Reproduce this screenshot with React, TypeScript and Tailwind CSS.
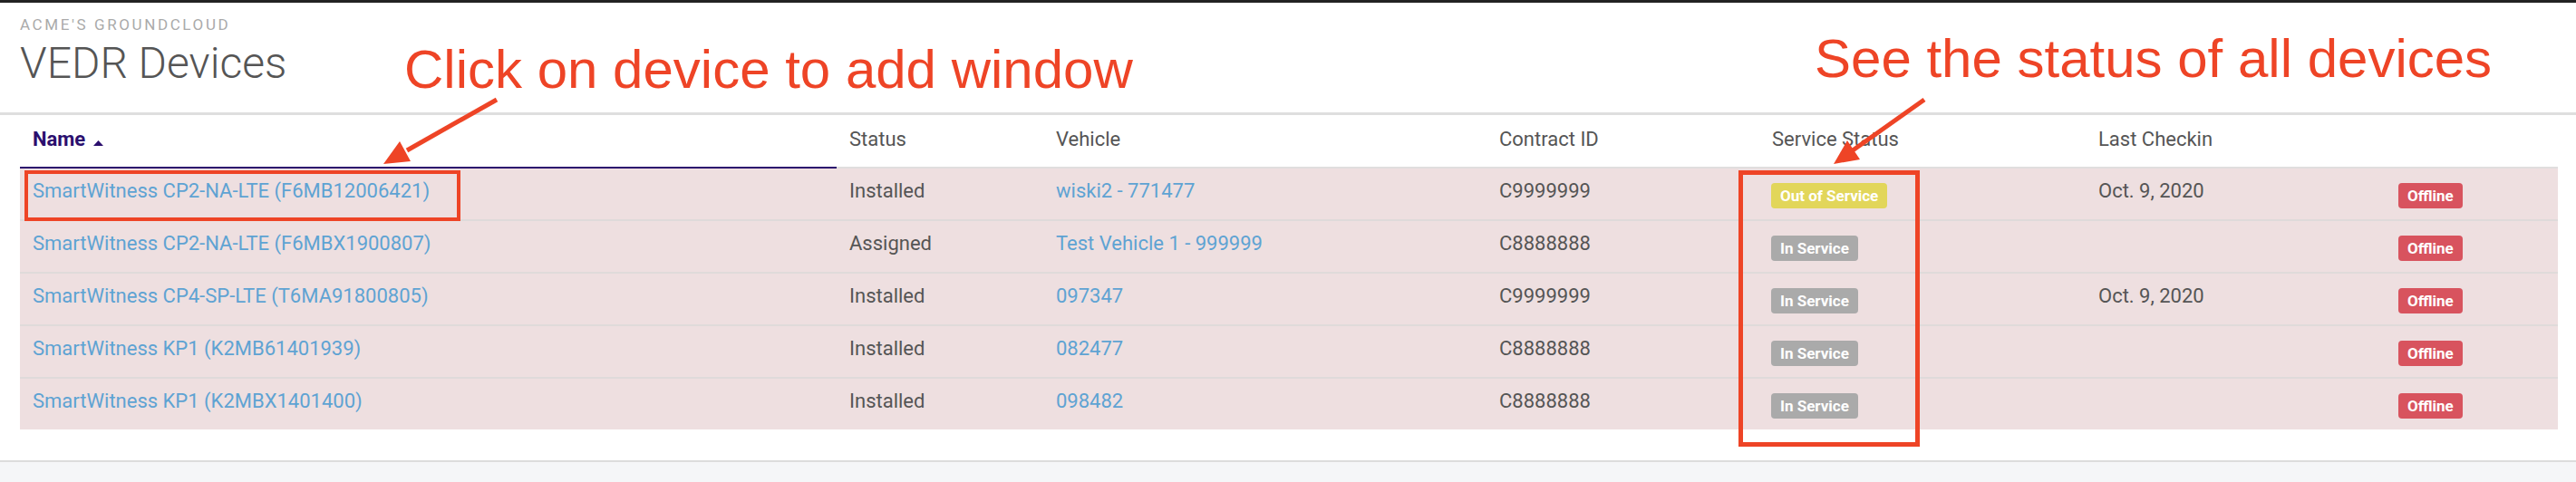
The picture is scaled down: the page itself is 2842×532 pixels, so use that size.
import React from "react";

type Device = {
  id: string;
  name: string;
  status: string;
  vehicle: string;
  contractId: string;
  inService: boolean;
  lastCheckin: string;
};

const devices: Device[] = [
  {
    id: "F6MB12006421",
    name: "SmartWitness CP2-NA-LTE (F6MB12006421)",
    status: "Installed",
    vehicle: "wiski2 - 771477",
    contractId: "C9999999",
    inService: false,
    lastCheckin: "Oct. 9, 2020",
  },
  {
    id: "F6MBX1900807",
    name: "SmartWitness CP2-NA-LTE (F6MBX1900807)",
    status: "Assigned",
    vehicle: "Test Vehicle 1 - 999999",
    contractId: "C8888888",
    inService: true,
    lastCheckin: "",
  },
  {
    id: "T6MA91800805",
    name: "SmartWitness CP4-SP-LTE (T6MA91800805)",
    status: "Installed",
    vehicle: "097347",
    contractId: "C9999999",
    inService: true,
    lastCheckin: "Oct. 9, 2020",
  },
  {
    id: "K2MB61401939",
    name: "SmartWitness KP1 (K2MB61401939)",
    status: "Installed",
    vehicle: "082477",
    contractId: "C8888888",
    inService: true,
    lastCheckin: "",
  },
  {
    id: "K2MBX1401400",
    name: "SmartWitness KP1 (K2MBX1401400)",
    status: "Installed",
    vehicle: "098482",
    contractId: "C8888888",
    inService: true,
    lastCheckin: "",
  },
];

const cols = "grid grid-cols-[901px_228px_489px_301px_360px_331px_190px]";

function Badge({ label, color }: { label: string; color: string }) {
  return (
    <span
      className={`inline-flex h-[28px] items-center rounded-[4px] px-[10px] text-[17px] font-bold leading-[28px] text-white ${color}`}
    >
      {label}
    </span>
  );
}

export default function App() {
  return (
    <div className="relative flex min-h-[532px] flex-col bg-white font-['Roboto',sans-serif] text-[#555]">
      {/* top bar */}
      <div className="h-[3px] bg-[#222]" />

      {/* page header */}
      <header className="h-[121px] px-[22px] pt-[14px]">
        <p className="text-[17px] uppercase leading-[20px] tracking-[2.6px] text-[#aaa]">
          Acme's GroundCloud
        </p>
        <h1 className="mt-[5px] text-[48px] font-light leading-[56px] text-[#555]">
          VEDR Devices
        </h1>
      </header>
      <div className="h-[3px] bg-[#dedede]" />

      {/* devices table */}
      <div className="ml-[22px] w-[2800px] text-[22px] leading-[26px]">
        <div className={cols}>
          <div className="flex h-[59px] items-start border-b-2 border-[#2b0f6e] pl-[14px] pt-[14px] font-bold text-[#2b0f6e]">
            Name
            <svg width="11" height="6" viewBox="0 0 11 6" className="ml-[9px] mt-[14px] fill-[#2b0f6e]">
              <path d="M0 6 L5.5 0 L11 6 Z" />
            </svg>
          </div>
          {["Status", "Vehicle", "Contract ID", "Service Status", "Last Checkin", ""].map((h, i) => (
            <div key={i} className="h-[59px] border-b-2 border-[#e0dede] pl-[14px] pt-[14px]">
              {h}
            </div>
          ))}
        </div>

        {devices.map((d, i) => (
          <div
            key={d.id}
            className={`${cols} h-[56px] bg-[#eedfe0] ${i < devices.length - 1 ? "box-content border-b-2 border-[#dfdada]" : ""}`}
          >
            <div className="pl-[14px] pt-[12px] whitespace-nowrap text-[#5ea3d3]">{d.name}</div>
            <div className="pl-[14px] pt-[12px]">{d.status}</div>
            <div className="pl-[14px] pt-[12px] whitespace-nowrap text-[#5ea3d3]">{d.vehicle}</div>
            <div className="pl-[14px] pt-[12px]">{d.contractId}</div>
            <div className="pl-[13px] pt-[16px]">
              {d.inService ? (
                <Badge label="In Service" color="bg-[#aaaaaa]" />
              ) : (
                <Badge label="Out of Service" color="bg-[#e2d65a]" />
              )}
            </div>
            <div className="pl-[14px] pt-[12px]">{d.lastCheckin}</div>
            <div className="pl-[14px] pt-[16px]">
              <Badge label="Offline" color="bg-[#d8535e]" />
            </div>
          </div>
        ))}
      </div>

      {/* footer strip */}
      <div className="mt-[34px] flex-1 border-t-2 border-[#dcdcdc] bg-[#f5f6f8]" />

      {/* annotations */}
      <p className="absolute left-[446px] top-[47px] font-['Liberation_Sans',Arial,sans-serif] text-[60px] leading-[60px] whitespace-nowrap text-[#ee4426]">
        Click on device to add window
      </p>
      <p className="absolute left-[2002px] top-[35px] font-['Liberation_Sans',Arial,sans-serif] text-[60px] leading-[60px] whitespace-nowrap text-[#ee4426]">
        See the status of all devices
      </p>
      <div className="pointer-events-none absolute left-[27px] top-[188px] h-[56px] w-[481px] border-[4px] border-[#ee4426]" />
      <div className="pointer-events-none absolute left-[1918px] top-[188px] h-[305px] w-[200px] border-[5px] border-[#ee4426]" />
      <svg
        className="pointer-events-none absolute left-0 top-0"
        width="2842"
        height="532"
        viewBox="0 0 2842 532"
      >
        <g stroke="#ee4426" strokeWidth="5" strokeLinecap="butt">
          <line x1="548" y1="110" x2="449" y2="166" />
          <line x1="2123" y1="110" x2="2044" y2="166" />
        </g>
        <g fill="#ee4426">
          <path d="M423 181 L453 178 L441 156 Z" />
          <path d="M2023 181 L2052 176 L2038 155 Z" />
        </g>
      </svg>
    </div>
  );
}
